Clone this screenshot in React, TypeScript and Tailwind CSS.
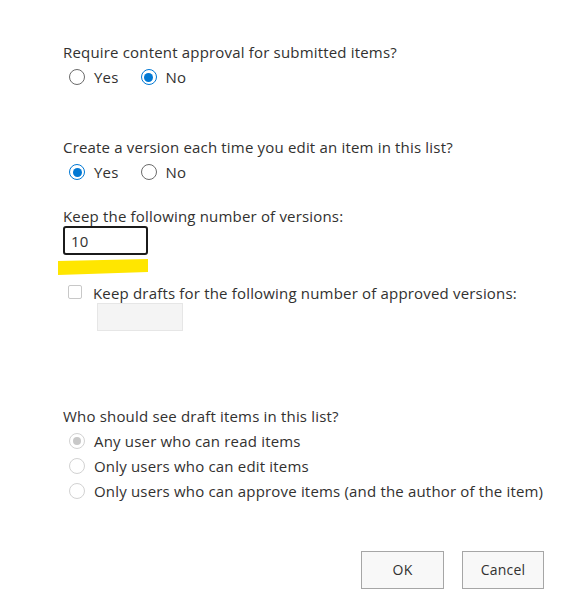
function Radio({ checked = false, disabled = false }: { checked?: boolean; disabled?: boolean }) {
  if (disabled) {
    return (
      <span className="flex h-[16px] w-[16px] shrink-0 items-center justify-center rounded-full border border-[#d2d2d2] bg-white">
        {checked && <span className="h-[8px] w-[8px] rounded-full bg-[#c8c8c8]"></span>}
      </span>
    );
  }
  return (
    <span
      className={
        checked
          ? "flex h-[16px] w-[16px] shrink-0 items-center justify-center rounded-full border border-[#0078d4] bg-white"
          : "flex h-[16px] w-[16px] shrink-0 items-center justify-center rounded-full border border-[#6b6b6b] bg-white"
      }
    >
      {checked && <span className="h-[9px] w-[9px] rounded-full bg-[#0078d4]"></span>}
    </span>
  );
}

function YesNo({ yes }: { yes: boolean }) {
  return (
    <div className="flex h-[24px] items-center pl-[6px]">
      <div className="flex items-center gap-[9px]">
        <Radio checked={yes} />
        <span>Yes</span>
      </div>
      <div className="ml-[22px] flex items-center gap-[9px]">
        <Radio checked={!yes} />
        <span>No</span>
      </div>
    </div>
  );
}

export default function App() {
  return (
    <div
      className="relative h-[596px] w-[587px] bg-white pl-[63px] pt-[42px] text-[15px] leading-[20px] tracking-[0.18px] text-[#323130]"
      style={{ fontFamily: '"Open Sans", "Noto Sans", sans-serif' }}
    >
      {/* content approval */}
      <p>Require content approval for submitted items?</p>
      <div className="mt-[3px]">
        <YesNo yes={false} />
      </div>

      {/* versioning */}
      <p className="mt-[48px]">Create a version each time you edit an item in this list?</p>
      <div className="mt-[3px]">
        <YesNo yes={true} />
      </div>

      <p className="mt-[22px]">Keep the following number of versions:</p>
      <div className="flex h-[29px] w-[85px] items-center rounded-[3px] border-2 border-[#1b1b1b] px-[6px]">
        10
      </div>
      <svg width="92" height="17" viewBox="0 0 92 17" className="-ml-[5px] mt-[4px] block">
        <polygon points="0,2 90,0 90,13 0,16" fill="#ffe600" />
      </svg>

      <div className="mt-[7px] flex items-start">
        <span className="ml-[5px] mt-[2px] h-[14px] w-[14px] rounded-[2px] border border-[#c8c8c8] bg-white"></span>
        <span className="ml-[11px]">Keep drafts for the following number of approved versions:</span>
      </div>
      <div className="ml-[34px] h-[28px] w-[86px] border border-[#e6e6e6] bg-[#f4f4f4]"></div>

      {/* draft visibility */}
      <p className="mt-[75px]">Who should see draft items in this list?</p>
      <div className="mt-[5px] flex flex-col gap-[5px] pl-[6px]">
        <div className="flex h-[20px] items-center gap-[9px]">
          <Radio checked disabled />
          <span>Any user who can read items</span>
        </div>
        <div className="flex h-[20px] items-center gap-[9px]">
          <Radio disabled />
          <span>Only users who can edit items</span>
        </div>
        <div className="flex h-[20px] items-center gap-[9px]">
          <Radio disabled />
          <span>Only users who can approve items (and the author of the item)</span>
        </div>
      </div>

      <div className="mt-[50px] flex gap-[18px] pl-[298px]">
        <button className="h-[38px] w-[83px] border border-[#a6a6a6] bg-[#f8f8f8] text-[14px] text-[#323130]">OK</button>
        <button className="h-[38px] w-[82px] border border-[#a6a6a6] bg-[#f8f8f8] text-[14px] text-[#323130]">Cancel</button>
      </div>
    </div>
  );
}
